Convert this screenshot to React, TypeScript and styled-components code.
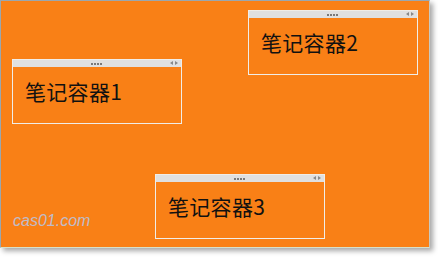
import React from "react";
import styled, { createGlobalStyle } from "styled-components";

const GlobalStyle = createGlobalStyle`
  html, body {
    margin: 0;
    padding: 0;
    background: #ffffff;
  }
`;

const Page = styled.div`
  width: 438px;
  height: 259px;
  overflow: hidden;
  background: #ffffff;
`;

const Canvas = styled.div`
  position: relative;
  width: 428px;
  height: 246px;
  background: #f98016;
  border-left: 1px solid #9ba7ae;
  border-top: 1px solid #9ba7ae;
  border-right: 1px solid #c9c9c0;
  border-bottom: 1px solid #d8e0c8;
  box-shadow: 3px 3px 5px rgba(0, 0, 0, 0.35);
`;

const Note = styled.div<{ $x: number; $y: number }>`
  position: absolute;
  left: ${(p) => p.$x}px;
  top: ${(p) => p.$y}px;
  width: 170px;
  height: 65px;
  box-sizing: border-box;
  border: 1px solid #f0ede8;
  display: flex;
  flex-direction: column;
`;

const TitleBar = styled.div`
  height: 7px;
  background: #e0e0e0;
  display: flex;
  align-items: center;
  justify-content: center;
  position: relative;
`;

const Grip = styled.div`
  display: flex;
  gap: 1px;
  margin-left: -2px;
`;

const GripDot = styled.span`
  width: 2px;
  height: 2px;
  background: #7a7a7a;
`;

const Arrows = styled.div`
  position: absolute;
  right: 3px;
  top: 1px;
  display: flex;
  gap: 2px;
`;

const Arrow = styled.span<{ $dir: "left" | "right" }>`
  width: 0;
  height: 0;
  border-top: 2.5px solid transparent;
  border-bottom: 2.5px solid transparent;
  ${(p) =>
    p.$dir === "left"
      ? "border-right: 3px solid #888;"
      : "border-left: 3px solid #888;"}
`;

const Body = styled.div`
  padding: 12px 0 0 12px;
  font-family: "Noto Sans CJK SC", "Microsoft YaHei", sans-serif;
  font-size: 21px;
  line-height: 24px;
  letter-spacing: 0.3px;
  color: #111;
`;

const Watermark = styled.div`
  position: absolute;
  left: 12px;
  top: 211px;
  font-family: "Liberation Sans", Arial, sans-serif;
  font-style: italic;
  font-size: 16px;
  color: #c0bcc8;
`;

const notes = [
  { x: 11, y: 58, title: "笔记容器1" },
  { x: 247, y: 9, title: "笔记容器2" },
  { x: 154, y: 173, title: "笔记容器3" },
];

export default function App() {
  return (
    <Page>
      <GlobalStyle />
      <Canvas>
        {notes.map((n) => (
          <Note key={n.title} $x={n.x} $y={n.y}>
            <TitleBar>
              <Grip>
                <GripDot />
                <GripDot />
                <GripDot />
                <GripDot />
              </Grip>
              <Arrows>
                <Arrow $dir="left" />
                <Arrow $dir="right" />
              </Arrows>
            </TitleBar>
            <Body>{n.title}</Body>
          </Note>
        ))}
        <Watermark>cas01.com</Watermark>
      </Canvas>
    </Page>
  );
}
